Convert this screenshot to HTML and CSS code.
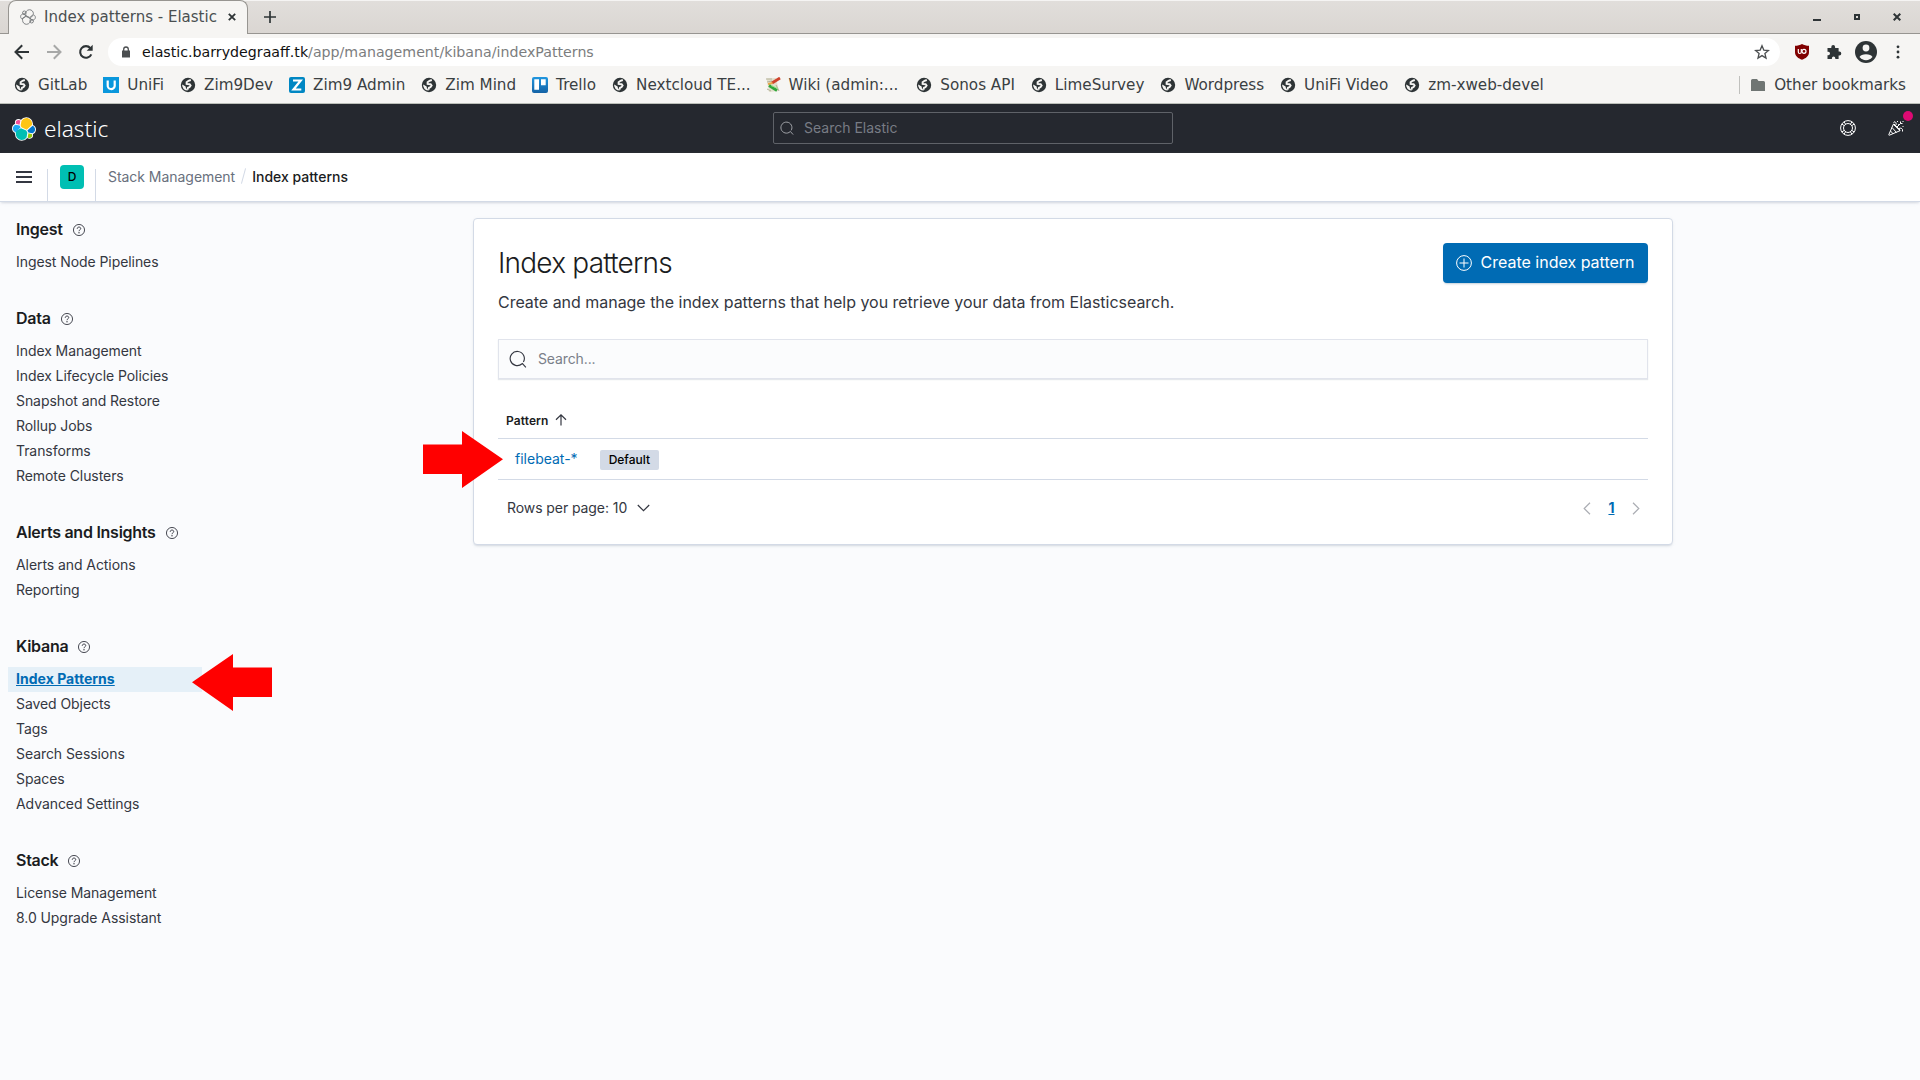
FILE: index.html
```html
<!DOCTYPE html>
<html lang="en">
<head>
<meta charset="utf-8">
<title>Index patterns - Elastic</title>
<link rel="stylesheet" href="styles.css">
</head>
<body>
<svg class="defs" width="0" height="0" aria-hidden="true">
  <symbol id="globe" viewBox="0 0 16 16"><circle cx="8" cy="8" r="7.2" fill="#2e3436"/><path d="M10.8 3 8.5 3.8 6.6 5.3v1.6l3 .3 1 1.4-1 1.5-1.6.7-.6 2" fill="none" stroke="#f6f5f3" stroke-width="1.9"/><path d="M2.3 7.5 5.6 9.6 6 11.5 8 13.6 5.5 13.2A6 6 0 0 1 2.2 9z" fill="#f6f5f3"/></symbol>
  <symbol id="help" viewBox="0 0 16 16"><g fill="none" stroke="currentColor"><circle cx="8" cy="8" r="7.4" stroke-width="1.2"/><path d="M5.7 6.4c0-1.4.9-2.3 2.3-2.3s2.3.8 2.3 2c0 1.6-2.3 1.7-2.3 3.5" stroke-width="1.3"/></g><circle cx="8" cy="11.7" r=".9" fill="currentColor"/></symbol>
  <symbol id="search" viewBox="0 0 16 16"><path d="M11.6 12.2a6.3 6.3 0 1 1 1.2-1.5M11.6 11.7l3.4 3.8" fill="none" stroke="currentColor"/></symbol>
  <symbol id="cluster" viewBox="0 0 32 32" overflow="visible">
    <path d="M12.58 13.787l7.002 3.211 7.066-6.213a7.849 7.849 0 00.152-1.557c0-4.287-3.472-7.77-7.744-7.77a7.73 7.73 0 00-6.382 3.38l-1.176 6.122z"/>
    <path d="M5.333 18.228A7.964 7.964 0 005.19 22.8c0 4.3 3.483 7.797 7.764 7.797a7.73 7.73 0 006.42-3.43l1.166-6.1-1.556-2.986-7.03-3.215z"/>
    <path d="M5.288 9.067l4.8 1.137L11.14 4.73A3.785 3.785 0 008.84 3.952a3.8 3.8 0 00-3.783 3.804c0 .44.08.875.23 1.31z"/>
    <path d="M4.872 10.214c-2.14.713-3.64 2.775-3.64 5.038 0 2.204 1.358 4.17 3.396 4.95l6.733-6.1-1.236-2.65z"/>
    <path d="M20.873 27.172a3.78 3.78 0 002.285.776 3.8 3.8 0 003.783-3.804c0-.44-.08-.875-.23-1.31l-4.796-1.125z"/>
    <path d="M21.848 20.563l5.28 1.238c2.14-.71 3.64-2.775 3.64-5.038 0-2.2-1.36-4.163-3.398-4.94L20.465 17.88z"/>
  </symbol>
</svg>

<header class="tabstrip">
  <div class="tab">
    <svg class="favicon" width="16" height="16"><use href="#cluster" fill="none" stroke="#6d7072" stroke-width="1.7"/></svg>
    <span class="tab-title">Index patterns - Elastic</span>
    <svg width="8" height="8" viewBox="0 0 8 8"><path d="M.8.8 7.2 7.2M7.2.8.8 7.2" stroke="#2e3436" stroke-width="1.8"/></svg>
  </div>
  <svg class="new-tab" width="12" height="12" viewBox="0 0 12 12"><path d="M6 0v12M0 6h12" stroke="#2e3436" stroke-width="1.7"/></svg>
  <div class="window-controls">
    <svg width="8" height="8" viewBox="0 0 8 8"><path d="M0 6h8v2H0z" fill="#2e3436"/></svg>
    <svg width="8" height="8" viewBox="0 0 8 8"><path d="M2 2h4v4H2z" fill="none" stroke="#2e3436" stroke-width="2"/></svg>
    <svg width="8" height="8" viewBox="0 0 8 8"><path d="M.7.7l6.6 6.6M7.3.7.7 7.3" stroke="#2e3436" stroke-width="2"/></svg>
  </div>
</header>

<div class="toolbar">
  <svg width="16" height="16" viewBox="0 0 16 16"><path d="M15 8H2M8.2 1.3 1.5 8l6.7 6.7" fill="none" stroke="#2e3436" stroke-width="2"/></svg>
  <svg width="16" height="16" viewBox="0 0 16 16"><path d="M1 8h13M7.8 1.3 14.5 8l-6.7 6.7" fill="none" stroke="#a7a8a7" stroke-width="2"/></svg>
  <svg width="16" height="16" viewBox="0 0 16 16"><path d="M13.3 10.3A5.8 5.8 0 1 1 12.4 4.2" fill="none" stroke="#2e3436" stroke-width="2.1"/><path d="M14.7.8v6H8.7z" fill="#2e3436"/></svg>
  <div class="omnibox">
    <svg width="10" height="12" viewBox="0 0 10 12"><path d="M1 4.5h8v7H1z" fill="#4b4e50"/><path d="M2.7 5V3.3a2.3 2.3 0 0 1 4.6 0V5" fill="none" stroke="#4b4e50" stroke-width="1.3"/></svg>
    <span class="url"><b>elastic.barrydegraaff.tk</b>/app/management/kibana/indexPatterns</span>
    <svg width="16" height="16" viewBox="0 0 16 16"><path d="M8 1.8l1.8 4.3 4.6.4-3.5 3 1.1 4.6L8 11.6l-4 2.5 1.1-4.6-3.5-3 4.6-.4z" fill="none" stroke="#4b4e50" stroke-width="1.3"/></svg>
  </div>
  <div class="extensions">
    <svg width="16" height="16" viewBox="0 0 16 16"><path d="M8 0c2 1.2 4.4 1.7 7 1.8v6.5c0 3.9-3.5 6.3-7 7.5-3.5-1.2-7-3.6-7-7.5V1.8C3.6 1.7 6 1.2 8 0z" fill="#800000"/><path d="M4.3 5v3a1.5 1.5 0 0 0 3 0V5" fill="none" stroke="#fff" stroke-width="1.2"/><circle cx="10" cy="7.3" r="2" fill="none" stroke="#fff" stroke-width="1.2"/></svg>
    <svg width="16" height="16" viewBox="0 0 16 16"><path d="M1.5 4h3.8V3a1.9 1.9 0 0 1 3.8 0v1h3.5v3.6h.8a1.9 1.9 0 0 1 0 3.8h-.8V15H9.3v-.8a1.7 1.7 0 0 0-3.4 0v.8H1.500v-3.8h.8a1.7 1.7 0 0 0 0-3.4h-.8z" fill="#2e3436"/></svg>
    <svg width="22" height="22" viewBox="0 0 22 22"><circle cx="11" cy="11" r="11" fill="#2e3436"/><circle cx="11" cy="7" r="3.4" fill="#f6f5f3"/><path d="M4.5 16a6.9 4.2 0 0 1 13 0 8.2 8.2 0 0 1-13 0z" fill="#f6f5f3"/></svg>
    <svg width="16" height="16" viewBox="0 0 16 16" fill="#2e3436"><circle cx="8" cy="2.8" r="1.4"/><circle cx="8" cy="8" r="1.4"/><circle cx="8" cy="13.2" r="1.4"/></svg>
  </div>
</div>

<nav class="bookmarks">
  <span class="bm"><svg width="16" height="16"><use href="#globe"/></svg>GitLab</span>
  <span class="bm"><svg width="16" height="16" viewBox="0 0 16 16"><path d="M0 0h16v16H0z" fill="#0a97dc"/><path d="M4.7 3.5V8a3.5 3.5 0 0 0 7 1V3.5" fill="none" stroke="#fff" stroke-width="2.2"/></svg>UniFi</span>
  <span class="bm"><svg width="16" height="16"><use href="#globe"/></svg>Zim9Dev</span>
  <span class="bm"><svg width="16" height="16" viewBox="0 0 16 16"><rect width="16" height="16" rx="2" fill="#0087c3"/><path d="M4 3.5h7.7L4.500 12.5H12.3" fill="none" stroke="#fff" stroke-width="2.2"/></svg>Zim9 Admin</span>
  <span class="bm"><svg width="16" height="16"><use href="#globe"/></svg>Zim Mind</span>
  <span class="bm"><svg width="16" height="16" viewBox="0 0 16 16"><defs><linearGradient id="trello" x2="0" y2="1"><stop stop-color="#2196df"/><stop offset="1" stop-color="#1462a5"/></linearGradient></defs><rect width="16" height="16" rx="2" fill="url(#trello)"/><path d="M2.3 2.3h4.7v10.4H2.3zM9 2.3h4.7v6H9z" fill="#fff"/></svg>Trello</span>
  <span class="bm"><svg width="16" height="16"><use href="#globe"/></svg>Nextcloud TE...</span>
  <span class="bm wiki"><svg width="16" height="16" viewBox="0 0 16 16"><path d="M1.5 1.5 11 1l3 13-10 1z" fill="#e3dfcc"/><path d="M1 2h6M2 5l5-1M2 12l4 2M11 8l3 6" stroke="#b5b39a" fill="none"/><path d="M15 1 7 6" stroke="#cf432c" stroke-width="2.8"/><path d="M7.5 6 3 7" stroke="#e9a54a" stroke-width="2"/><path d="M4 8.5l8 5" stroke="#2ea63a" stroke-width="2.8"/><path d="M6 8.5l7 3" stroke="#9be08d"/></svg>Wiki (admin:...</span>
  <span class="bm"><svg width="16" height="16"><use href="#globe"/></svg>Sonos API</span>
  <span class="bm"><svg width="16" height="16"><use href="#globe"/></svg>LimeSurvey</span>
  <span class="bm"><svg width="16" height="16"><use href="#globe"/></svg>Wordpress</span>
  <span class="bm"><svg width="16" height="16"><use href="#globe"/></svg>UniFi Video</span>
  <span class="bm"><svg width="16" height="16"><use href="#globe"/></svg>zm-xweb-devel</span>
  <span class="bm other"><svg width="16" height="16" viewBox="0 0 16 16"><path d="M1 3.5A1.5 1.5 0 0 1 2.5 2H7l1.5 2h5A1.5 1.5 0 0 1 15 5.5V14H1z" fill="#6f7573"/></svg>Other bookmarks</span>
</nav>

<div class="kibana-bar">
  <div class="brand">
    <svg width="24" height="24" viewBox="0 0 32 32" overflow="visible">
      <use href="#cluster" width="32" height="32" fill="#fff" stroke="#fff" stroke-width="2.4"/>
      <path fill="#FEC514" d="M12.58 13.787l7.002 3.211 7.066-6.213a7.849 7.849 0 00.152-1.557c0-4.287-3.472-7.77-7.744-7.77a7.73 7.73 0 00-6.382 3.38l-1.176 6.122z"/>
      <path fill="#00BFB3" d="M5.333 18.228A7.964 7.964 0 005.19 22.8c0 4.3 3.483 7.797 7.764 7.797a7.73 7.73 0 006.42-3.43l1.166-6.1-1.556-2.986-7.03-3.215z"/>
      <path fill="#F04E98" d="M5.288 9.067l4.8 1.137L11.14 4.73A3.785 3.785 0 008.84 3.952a3.8 3.8 0 00-3.783 3.804c0 .44.08.875.23 1.31z"/>
      <path fill="#1BA9F5" d="M4.872 10.214c-2.14.713-3.64 2.775-3.64 5.038 0 2.204 1.358 4.17 3.396 4.95l6.733-6.1-1.236-2.65z"/>
      <path fill="#93C90E" d="M20.873 27.172a3.78 3.78 0 002.285.776 3.8 3.8 0 003.783-3.804c0-.44-.08-.875-.23-1.31l-4.796-1.125z"/>
      <path fill="#0077CC" d="M21.848 20.563l5.28 1.238c2.14-.71 3.64-2.775 3.64-5.038 0-2.2-1.36-4.163-3.398-4.94L20.465 17.88z"/>
    </svg>
    <span class="wordmark">elastic</span>
  </div>
  <div class="global-search"><svg width="14" height="14"><use href="#search"/></svg><span>Search Elastic</span></div>
  <div class="bar-actions">
    <svg width="16" height="16" viewBox="0 0 16 16" fill="none" stroke="#fff"><circle cx="8" cy="8" r="7.4"/><circle cx="8" cy="8" r="4.5"/><path d="M4.1 1.9l1.6 2.5M1.9 4.1l2.5 1.6M11.9 1.9l-1.6 2.5M14.1 4.1l-2.5 1.6M4.1 14.1l1.6-2.5M1.9 11.9l2.5-1.6M11.9 14.1l-1.6-2.5M14.1 11.9l-2.5-1.6"/></svg>
    <span class="news">
      <svg width="16" height="16" viewBox="0 0 16 16" fill="none" stroke="#fff"><path d="M5.3 4.3.8 14.7c-.1.4.2.7.6.5L12 10.7zM4 7.5l4.5 5M2.5 11l2.8 3M5.3 4.3l.7-.3 6 6v.7M7.5 5.5c1-.8 1-2.5-.5-3.8L5.500 2.5M9 7l3.5-3.5M12.5 3.5V1.5M12.5 3.5h2M11 8.5c1.5-.8 3-.2 3.5 1v2"/><path d="M9.5 1v1M10.5 4v.8M15 1v1M15 6v1"/></svg>
      <i class="dot"></i>
    </span>
  </div>
</div>

<div class="crumb-bar">
  <div class="menu"><svg width="16" height="12" viewBox="0 0 16 12"><path d="M0 1h16M0 6h16M0 11h16" stroke="#343741" stroke-width="2"/></svg></div>
  <div class="space"><span class="avatar">D</span></div>
  <div class="crumbs"><span>Stack Management</span><i class="slash"></i><span class="current">Index patterns</span></div>
</div>

<div class="page">
  <aside class="sidebar">
    <section><h2>Ingest <svg width="12" height="12"><use href="#help"/></svg></h2><ul><li>Ingest Node Pipelines</li></ul></section>
    <section><h2>Data <svg width="12" height="12"><use href="#help"/></svg></h2><ul><li>Index Management</li><li>Index Lifecycle Policies</li><li>Snapshot and Restore</li><li>Rollup Jobs</li><li>Transforms</li><li>Remote Clusters</li></ul></section>
    <section><h2>Alerts and Insights <svg width="12" height="12"><use href="#help"/></svg></h2><ul><li>Alerts and Actions</li><li>Reporting</li></ul></section>
    <section><h2>Kibana <svg width="12" height="12"><use href="#help"/></svg></h2><ul><li class="selected">Index Patterns</li><li>Saved Objects</li><li>Tags</li><li>Search Sessions</li><li>Spaces</li><li>Advanced Settings</li></ul></section>
    <section><h2>Stack <svg width="12" height="12"><use href="#help"/></svg></h2><ul><li>License Management</li><li>8.0 Upgrade Assistant</li></ul></section>
  </aside>

  <main class="content">
    <div class="panel">
      <div class="panel-head">
        <h1>Index patterns</h1>
        <button class="create"><svg width="16" height="16" viewBox="0 0 16 16"><path d="M8 3.5v9M3.5 8h9" stroke="#fff"/><circle cx="8" cy="8" r="7.4" fill="none" stroke="#fff"/></svg><span>Create index pattern</span></button>
      </div>
      <p class="lead">Create and manage the index patterns that help you retrieve your data from Elasticsearch.</p>
      <div class="field"><svg width="18" height="18"><use href="#search"/></svg><span>Search...</span></div>
      <div class="thead">Pattern<svg width="12" height="12" viewBox="0 0 12 12"><path d="M6 11.5V1M1 5.8 6 .9l5 4.9" fill="none" stroke="#343741" stroke-width="1.2"/></svg></div>
      <div class="trow"><a>filebeat-*</a><span class="badge">Default</span></div>
      <div class="tfoot">
        <span class="rows"><span>Rows per page: 10</span><svg width="13" height="8" viewBox="0 0 13 8"><path d="M.8 1l5.7 5.7L12.2 1" fill="none" stroke="#343741" stroke-width="1.2"/></svg></span>
        <span class="pager">
          <svg width="8" height="13" viewBox="0 0 8 13"><path d="M7 .8 1.2 6.5 7 12.2" fill="none" stroke="#abadb3" stroke-width="1.2"/></svg>
          <b>1</b>
          <svg width="8" height="13" viewBox="0 0 8 13"><path d="M1 .8l5.8 5.7L1 12.2" fill="none" stroke="#abadb3" stroke-width="1.2"/></svg>
        </span>
      </div>
    </div>
  </main>
</div>

<svg class="arrow to-nav" width="80" height="57" viewBox="0 0 80 57"><path d="M0 28.3 41 0v13.5h39v29.5H41v14z" fill="#f00"/></svg>
<svg class="arrow to-row" width="80" height="57" viewBox="0 0 80 57"><path d="M80 28.3 39 0v13.5H0v29.5h39v14z" fill="#f00"/></svg>
</body>
</html>
```
FILE: styles.css
```css
* { box-sizing: border-box; }
body { margin: 0; width: 1920px; height: 1080px; overflow: hidden; background: #fafbfd; font-family: "Inter", sans-serif; font-size: 14px; color: #343741; }
svg { display: block; flex: none; }
h1, h2, p, ul { margin: 0; padding: 0; }
.defs { position: absolute; }

/* Browser window */
.tabstrip { display: flex; align-items: center; height: 34px; padding-left: 8px; background: linear-gradient(#e1dedb, #dad6d2); border-top: 1px solid #f5f4f3; border-bottom: 1px solid #979591; font-family: "DejaVu Sans", sans-serif; }
.tab { display: flex; align-items: center; width: 240px; height: 34px; margin-top: -1px; margin-bottom: -1px; padding: 0 11px 1px 11px; background: #f6f5f3; border: 1px solid #979591; border-bottom: 0; border-radius: 8px 8px 0 0; }
.tab-title { flex: 1; margin-left: 8px; font-size: 15px; line-height: 18px; color: #4a4f51; white-space: nowrap; }
.new-tab { margin-left: 16px; }
.window-controls { display: flex; gap: 32px; margin-left: auto; margin-right: 19px; }

.toolbar { display: flex; align-items: center; gap: 16px; height: 35px; padding: 1px 14px 0; background: #f6f5f3; font-family: "DejaVu Sans", sans-serif; }
.omnibox { display: flex; align-items: center; flex: 1; height: 28px; margin-left: -2px; padding: 0 10px 0 13px; border-radius: 14px; background: #fff; }
.url { flex: 1; margin-left: 11px; font-size: 14.2px; color: #7b7d7e; }
.url b { font-weight: 400; color: #111; }
.extensions { display: flex; align-items: center; gap: 13px; margin-left: -2px; }
.extensions svg:first-child { margin-right: 3px; }

.bookmarks { display: flex; align-items: center; gap: 16px; height: 35px; padding: 0 14px 2px; background: #f6f5f3; border-bottom: 1px solid #bcbfb9; font-family: "DejaVu Sans", sans-serif; font-size: 15.2px; color: #3a4042; }
.bm { display: flex; align-items: center; gap: 8px; height: 18px; line-height: 18px; letter-spacing: -.01px; white-space: nowrap; }
.wiki { margin-left: -2px; margin-right: 2px; }
.other { margin-left: auto; padding-left: 10px; border-left: 1px solid #c0c0bd; }

/* Kibana header */
.kibana-bar { display: grid; grid-template-columns: 761px 400px 1fr; align-items: center; height: 49px; padding: 0 16px 0 12px; background: #25282f; }
.brand { display: flex; align-items: center; gap: 8px; }
.wordmark { font-family: "Noto Sans", sans-serif; font-size: 22.5px; font-weight: 300; line-height: 24px; letter-spacing: .05px; color: #fff; }
.global-search { display: flex; align-items: center; gap: 10px; height: 32px; margin-bottom: 1px; padding-left: 6px; border: 1px solid #5f6268; border-radius: 2px; color: #787c85; }
.global-search svg { color: #b0b2b7; }
.global-search span { padding-bottom: 1px; }
.bar-actions { display: flex; justify-content: flex-end; gap: 32px; margin-bottom: 1px; }
.news { position: relative; }
.dot { position: absolute; left: 15px; top: -9px; width: 10px; height: 10px; border-radius: 50%; background: #dd0a73; }

.crumb-bar { position: relative; display: flex; height: 49px; background: #fff; border-bottom: 1px solid #d3dae6; box-shadow: 0 2px 2px -1px rgba(152,162,179,.3), 0 1px 5px -2px rgba(152,162,179,.3); }
.menu { width: 48px; padding: 18px 0 0 16px; }
.space { width: 48px; padding: 12px 0 0 12px; }
.menu, .space { background: linear-gradient(#d3dae6, #d3dae6) right bottom / 1px 32px no-repeat; }
.avatar { display: block; width: 24px; height: 24px; border-radius: 4px; background: #00bfb3; color: #000; font-size: 12px; font-weight: 500; line-height: 24px; text-align: center; }
.crumbs { display: flex; align-items: center; height: 46px; padding-left: 12px; color: #69707d; }
.slash { width: 1px; height: 16px; margin: 0 8px; background: #d3dae6; transform: rotate(15deg); }
.crumbs span:first-child { letter-spacing: -.04px; }
.current { color: #1a1c21; font-weight: 500; }

/* Page */
.page { display: flex; }
.sidebar { display: flex; flex-direction: column; gap: 32px; width: 202px; padding: 16px 0 0 8px; color: #343741; }
.sidebar h2 { display: flex; align-items: center; gap: 10px; height: 24px; margin-bottom: 8px; padding: 0 0 2px 8px; font-size: 16px; font-weight: 600; letter-spacing: -.26px; color: #1a1c21; }
.sidebar h2 svg { position: relative; top: 1px; color: #343741; }
.sidebar ul { list-style: none; }
.sidebar li { height: 25px; padding-left: 8px; line-height: 23px; letter-spacing: -.07px; }
.sidebar .selected { background: #e5f0f8; color: #006bb4; font-weight: 700; letter-spacing: .03px; text-decoration: underline; }

.content { flex: 1; display: flex; justify-content: center; margin-left: 24px; padding: 16px 0 0; }
.panel { width: 1200px; height: 327px; padding: 24px; background: #fff; border: 1px solid #d3dae6; border-radius: 4px; box-shadow: 0 2px 2px -1px rgba(152,162,179,.3), 0 1px 5px -2px rgba(152,162,179,.3); }
.panel-head { display: flex; justify-content: space-between; height: 40px; align-items: center; }
h1 { font-size: 28px; font-weight: 300; line-height: 40px; letter-spacing: -.028em; color: #1a1c21; }
.create { display: flex; align-items: center; gap: 8.5px; width: 205px; height: 40px; padding: 0 12px 0 13px; border: 0; border-radius: 4px; background: #006bb4; color: #fff; font: 400 16px "Inter", sans-serif; white-space: nowrap; box-shadow: 0 2px 2px -1px rgba(54,97,126,.3); }
.create span, .field span, .rows span { padding-bottom: 2px; }
.lead { margin: 7px 0 25px; font-size: 16px; line-height: 24px; letter-spacing: -.027px; }
.field { display: flex; align-items: center; gap: 11px; height: 40px; padding-left: 10px; background: #fbfcfd; border: 1px solid #e1e4ec; color: #7a7f89; box-shadow: 0 1px 1px rgba(152,162,179,.25); letter-spacing: -.12px; }
.field svg { color: #343741; }
.thead { display: flex; align-items: center; gap: 6px; height: 60px; padding: 23px 0 0 8px; border-bottom: 1px solid #d3dae6; font-size: 12px; font-weight: 600; letter-spacing: .1px; color: #1a1c21; }
.trow { display: flex; align-items: center; height: 41px; padding-left: 17px; border-bottom: 1px solid #d3dae6; color: #006bb4; }
.trow a { padding-bottom: 2px; }
.badge { height: 20px; margin: 1px 0 0 22px; padding: 0 9px; border-radius: 2px; background: #d3dae6; color: #000; font-size: 12px; font-weight: 500; line-height: 20px; }
.tfoot { display: flex; align-items: center; justify-content: space-between; height: 56px; padding: 0 8px 0 9px; }
.rows { display: flex; align-items: center; gap: 9.5px; letter-spacing: -.08px; }
.pager { display: flex; align-items: center; gap: 16px; }
.pager b { width: 9px; padding-bottom: 2px; text-align: center; color: #006bb4; font-weight: 700; text-decoration: underline; }

/* Annotation arrows laid over the page */
.arrow { position: absolute; }
.to-nav { left: 192px; top: 654px; }
.to-row { left: 423px; top: 431px; }
```
